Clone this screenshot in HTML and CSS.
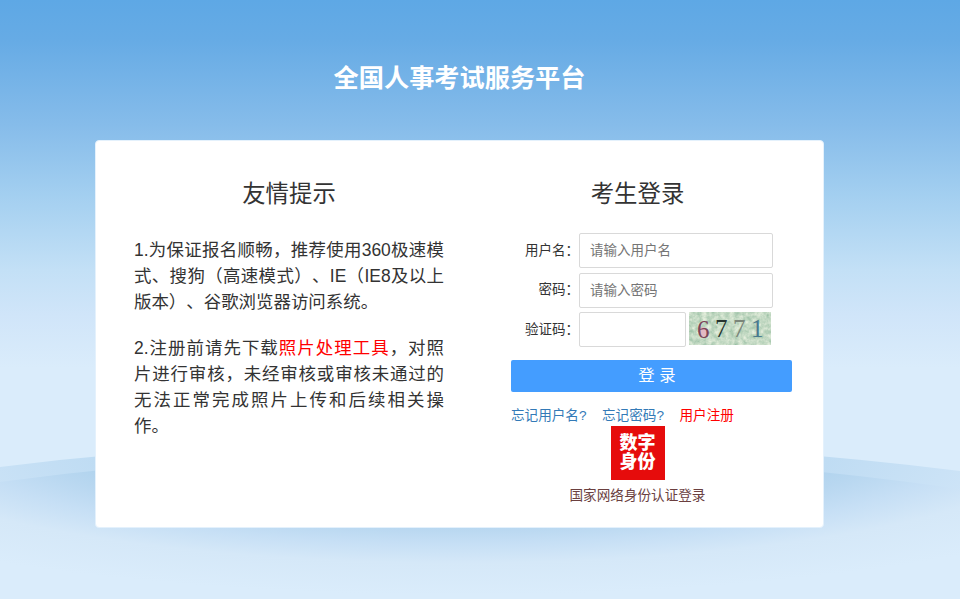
FILE: index.html
```html
<!DOCTYPE html>
<html lang="zh-CN">
<head>
    <meta charset="UTF-8">
    <meta name="viewport" content="width=device-width, initial-scale=1.0">
    <title>全国人事考试服务平台</title>
    <link rel="stylesheet" href="styles.css">
</head>
<body>
    <svg class="bg" viewBox="0 0 960 599" preserveAspectRatio="none" aria-hidden="true">
        <defs>
            <radialGradient id="hill1" gradientUnits="userSpaceOnUse" cx="0" cy="0" r="1" gradientTransform="translate(460 440) scale(620 180)">
                <stop offset="0" stop-color="#b0d3ef"/>
                <stop offset=".6" stop-color="#bfdcf3"/>
                <stop offset="1" stop-color="#d5e8f9"/>
            </radialGradient>
            <radialGradient id="hill2" gradientUnits="userSpaceOnUse" cx="0" cy="0" r="1" gradientTransform="translate(460 435) scale(760 160)">
                <stop offset="0" stop-color="#a3cbea"/>
                <stop offset=".5" stop-color="#aed2ed"/>
                <stop offset=".58" stop-color="#b8d7f0"/>
                <stop offset=".68" stop-color="#c6dff5"/>
                <stop offset=".8" stop-color="#d5e8f8"/>
                <stop offset="1" stop-color="#daecfb"/>
            </radialGradient>
        </defs>
        <path fill="url(#hill1)" d="M0 467Q460 410 960 471V599H0z"/>
        <path fill="url(#hill2)" d="M0 482Q460 419 960 489V599H0z"/>
    </svg>

    <h1 class="title">全国人事考试服务平台</h1>

    <div class="box">
        <div class="tips">
            <h2>友情提示</h2>
            <p>1.为保证报名顺畅，推荐使用360极速模式、搜狗（高速模式）、IE（IE8及以上版本）、谷歌浏览器访问系统。</p>
            <p>2.注册前请先下载<a href="#" class="red">照片处理工具</a>，对照片进行审核，未经审核或审核未通过的无法正常完成照片上传和后续相关操作。</p>
        </div>

        <form class="login">
            <h2>考生登录</h2>
            <div class="row">
                <label for="username">用户名：</label>
                <input type="text" id="username" placeholder="请输入用户名">
            </div>
            <div class="row">
                <label for="password">密码：</label>
                <input type="password" id="password" placeholder="请输入密码">
            </div>
            <div class="row">
                <label for="code">验证码：</label>
                <input type="text" id="code" class="short">
                <svg class="captcha" viewBox="0 0 82 33">
                    <filter id="noise" x="0" y="0" width="100%" height="100%" color-interpolation-filters="sRGB">
                        <feTurbulence type="fractalNoise" baseFrequency=".22" numOctaves="3" seed="4"/>
                        <feColorMatrix values=".4 0 0 0 .57  .25 0 0 0 .73  .3 0 0 0 .62  0 0 0 0 1"/>
                    </filter>
                    <rect width="82" height="33" fill="#c4dcc8" filter="url(#noise)"/>
                    <ellipse cx="14" cy="20" rx="4" ry="5" fill="#e3b9c4"/>
                    <text x="8" y="26" fill="#7d4459">6</text>
                    <text x="26" y="25" fill="#27332f">7</text>
                    <text x="44" y="25" fill="#7b8579">7</text>
                    <text x="62" y="25" fill="#48798e">1</text>
                </svg>
            </div>
            <button type="button" class="btn">登 录</button>
            <div class="links">
                <a href="#">忘记用户名?</a>
                <a href="#">忘记密码?</a>
                <a href="#" class="red">用户注册</a>
            </div>
            <a href="#" class="net-id">
                <span class="logo">数字<br>身份</span>
                <span>国家网络身份认证登录</span>
            </a>
        </form>
    </div>
</body>
</html>
```

FILE: styles.css
```css
* {
    box-sizing: border-box;
}
body {
    margin: 0;
    height: 599px;
    overflow: hidden;
    font: 13.5px/1.43 "Liberation Sans", "Noto Sans CJK SC", sans-serif;
    color: #333;
    background: linear-gradient(#5ea8e5 0, #66abe5 40px, #86bcea 125px, #a3cff0 195px, #c3e0f6 270px, #d0e5f9 315px, #daecfb 368px, #daecfb 100%);
    text-spacing-trim: space-all;
}
.bg {
    position: absolute;
    left: 0;
    top: 0;
    width: 960px;
    height: 599px;
    z-index: -1;
}
a {
    color: #337ab7;
    text-decoration: none;
}
a.red {
    color: #f00;
}
.title {
    margin: 0;
    width: 919px;
    height: 140px;
    padding-top: 58px;
    font-size: 25.2px;
    line-height: 40px;
    font-weight: bold;
    text-align: center;
    color: #fff;
}
.box {
    display: flex;
    width: 729px;
    height: 388px;
    margin-left: 95px;
    padding: 0 31px 0 38px;
    background: #fff;
    border: 1px solid #e4f1fc;
    border-radius: 4px;
}
h2 {
    margin: 0;
    font-size: 23.4px;
    line-height: 34px;
    font-weight: normal;
    text-align: center;
}
.tips {
    width: 311px;
    padding-top: 36px;
}
.tips h2 {
    margin-bottom: 26px;
}
.tips p {
    margin: 0 0 20px;
    font-size: 17.45px;
    line-height: 26px;
    text-align: justify;
}
.login {
    width: 281px;
    margin-left: 67px;
    padding-top: 36px;
}
.login h2 {
    width: 253px;
    margin-bottom: 22px;
}
.row {
    display: flex;
    align-items: center;
    height: 34.7px;
    margin-bottom: 5px;
}
.row label {
    width: 68px;
    flex: none;
    text-align: right;
    white-space: nowrap;
}
.row input {
    width: 194px;
    height: 35px;
    padding: 0 10px;
    border: 1px solid #d9d9d9;
    border-radius: 2px;
    font: inherit;
    outline: none;
}
.row input::placeholder {
    color: #757575;
}
.row .short {
    width: 107px;
}
.captcha {
    width: 82px;
    height: 33px;
    margin: -2px 0 0 3px;
}
.captcha text {
    font: 25px "Liberation Serif", serif;
}
.btn {
    display: block;
    width: 281px;
    height: 32px;
    margin-top: 12.5px;
    padding: 0 0 0 11px;
    border: 0;
    border-radius: 2px;
    background: #449dff;
    color: #fff;
    font: 16.4px/31px "Liberation Sans", "Noto Sans CJK SC", sans-serif;
}
.links {
    display: flex;
    gap: 15.5px;
    height: 20px;
    margin-top: 14px;
    line-height: 20px;
    font-size: 13.6px;
}
.net-id {
    display: flex;
    flex-direction: column;
    align-items: center;
    width: 253px;
    color: #6b3f3f;
    font-size: 13.6px;
}
.logo {
    width: 54px;
    height: 54px;
    margin-bottom: 6px;
    padding-top: 8px;
    background: #e60c0c;
    color: #fff;
    font-size: 18px;
    line-height: 19px;
    font-weight: 900;
    text-align: center;
}
```
